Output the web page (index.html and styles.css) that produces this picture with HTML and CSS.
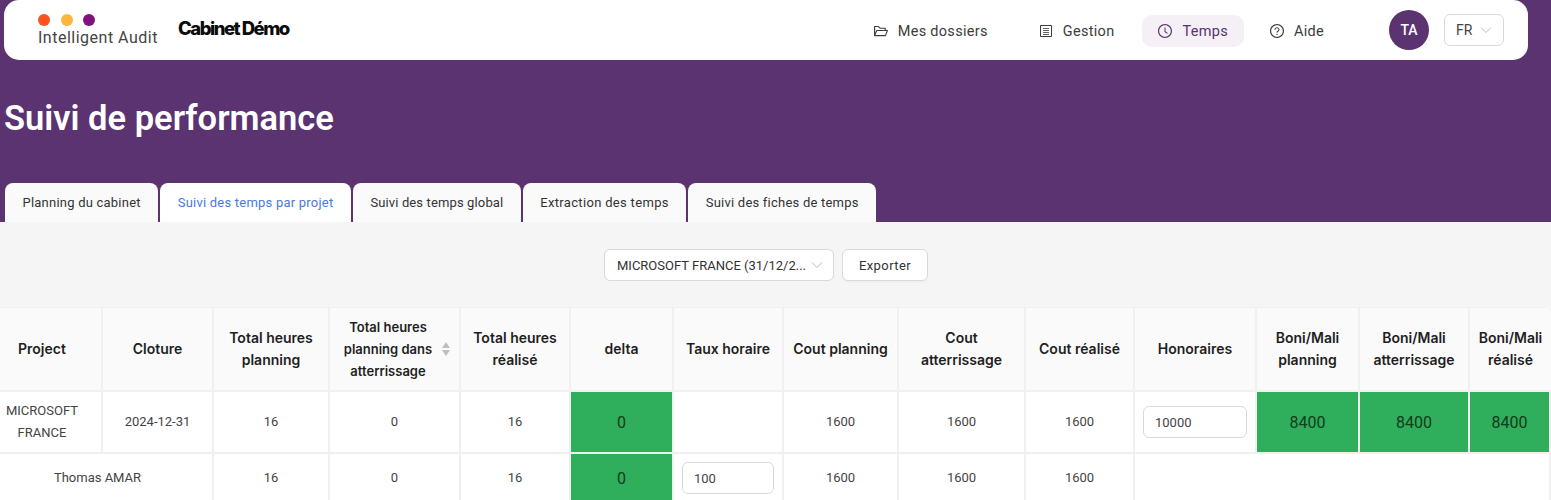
FILE: index.html
```html
<!DOCTYPE html>
<html lang="fr">
<head>
    <meta charset="UTF-8">
    <meta name="viewport" content="width=device-width, initial-scale=1.0">
    <title>Suivi de performance</title>
    <link rel="stylesheet" href="styles.css">
</head>
<body>
    <div class="page">
        <header class="topbar">
            <div class="brand">
                <div class="dots">
                    <span class="dot dot-red"></span>
                    <span class="dot dot-yellow"></span>
                    <span class="dot dot-purple"></span>
                </div>
                <div class="brand-name">Intelligent Audit</div>
            </div>
            <div class="cabinet-logo">Cabinet Démo</div>
            <nav class="nav">
                <a class="nav-item nav-dossiers">
                    <svg class="nav-icon" viewBox="0 0 1024 1024"><path d="M928 444H820V330.4c0-17.7-14.3-32-32-32H473L355.7 186.2a8.15 8.15 0 0 0-5.5-2.2H96c-17.7 0-32 14.3-32 32v592c0 17.7 14.3 32 32 32h698c13 0 24.8-7.9 29.7-20l134-332c1.5-3.8 2.3-7.9 2.3-12 0-17.7-14.3-32-32-32zM136 256h188.5l119.6 114.4H748V444H238c-13 0-24.8 7.9-29.7 20L136 643.2V256zm635.3 512H159l103.3-256h612.4L771.3 768z"/></svg>
                    Mes dossiers
                </a>
                <a class="nav-item nav-gestion">
                    <svg class="nav-icon" viewBox="0 0 16 16"><path d="M2.5 2.5h11v11h-11z" fill="none" stroke="currentColor"/><path d="M5 5.5h6M5 7.5h6M5 9.5h6M5 11.5h6" stroke="currentColor" stroke-width="0.8" fill="none"/></svg>
                    Gestion
                </a>
                <a class="nav-item nav-active">
                    <svg class="nav-icon" viewBox="0 0 1024 1024"><path d="M512 64C264.6 64 64 264.6 64 512s200.6 448 448 448 448-200.6 448-448S759.4 64 512 64zm0 820c-205.4 0-372-166.6-372-372s166.6-372 372-372 372 166.6 372 372-166.6 372-372 372z"/><path d="M686.7 638.6L544.1 535.5V288c0-4.4-3.6-8-8-8H488c-4.4 0-8 3.6-8 8v275.4c0 2.6 1.2 5 3.3 6.5l165.4 120.6c3.6 2.6 8.6 1.8 11.2-1.7l28.6-39c2.6-3.7 1.8-8.7-1.8-11.2z"/></svg>
                    Temps
                </a>
                <a class="nav-item">
                    <svg class="nav-icon" viewBox="0 0 1024 1024"><path d="M512 64C264.6 64 64 264.6 64 512s200.6 448 448 448 448-200.6 448-448S759.4 64 512 64zm0 820c-205.4 0-372-166.6-372-372s166.6-372 372-372 372 166.6 372 372-166.6 372-372 372z"/><path d="M623.6 316.7C593.6 290.4 554 276 512 276s-81.6 14.5-111.6 40.7C369.2 344 352 380.7 352 420v7.6c0 4.4 3.6 8 8 8h48c4.4 0 8-3.6 8-8V420c0-44.1 43.1-80 96-80s96 35.9 96 80c0 31.1-22 59.6-56.1 72.7-21.2 8.1-39.2 22.3-52.1 40.9-13.1 19-19.9 41.8-19.9 64.9V620c0 4.4 3.6 8 8 8h48c4.4 0 8-3.6 8-8v-22.7a48.3 48.3 0 0 1 30.9-44.8c59-22.7 97.1-74.7 97.1-132.5.1-39.3-17.1-76-48.3-103.3zM472 732a40 40 0 1 0 80 0 40 40 0 1 0-80 0z"/></svg>
                    Aide
                </a>
            </nav>
            <div class="avatar">TA</div>
            <div class="lang-select">
                <span>FR</span>
                <svg class="chevron" viewBox="0 0 12 8"><path d="M1 1.5l5 5 5-5" fill="none" stroke="currentColor"/></svg>
            </div>
        </header>

        <h1 class="page-title">Suivi de performance</h1>

        <div class="tabs">
            <div class="tab">Planning du cabinet</div>
            <div class="tab tab-active">Suivi des temps par projet</div>
            <div class="tab">Suivi des temps global</div>
            <div class="tab">Extraction des temps</div>
            <div class="tab">Suivi des fiches de temps</div>
        </div>

        <main class="content">
            <div class="toolbar">
                <div class="project-select">
                    <span>MICROSOFT FRANCE (31/12/2...</span>
                    <svg class="chevron" viewBox="0 0 12 8"><path d="M1 1.5l5 5 5-5" fill="none" stroke="currentColor"/></svg>
                </div>
                <button class="export-btn">Exporter</button>
            </div>

            <table class="perf-table">
                <colgroup>
                    <col><col><col><col><col><col><col><col><col><col><col><col><col><col>
                </colgroup>
                <thead>
                    <tr>
                        <th>Project</th>
                        <th>Cloture</th>
                        <th>Total heures planning</th>
                        <th>
                            <div class="sort-head">
                                <span>Total heures planning dans atterrissage</span>
                                <span class="sorter"><i class="caret-up"></i><i class="caret-down"></i></span>
                            </div>
                        </th>
                        <th>Total heures réalisé</th>
                        <th>delta</th>
                        <th>Taux horaire</th>
                        <th>Cout planning</th>
                        <th>Cout atterrissage</th>
                        <th>Cout réalisé</th>
                        <th>Honoraires</th>
                        <th>Boni/Mali planning</th>
                        <th>Boni/Mali atterrissage</th>
                        <th>Boni/Mali réalisé</th>
                    </tr>
                </thead>
                <tbody>
                    <tr class="row-project">
                        <td>MICROSOFT FRANCE</td>
                        <td>2024-12-31</td>
                        <td>16</td>
                        <td>0</td>
                        <td>16</td>
                        <td class="cell-green">0</td>
                        <td></td>
                        <td>1600</td>
                        <td>1600</td>
                        <td>1600</td>
                        <td class="cell-input"><input class="num-input" type="text" value="10000"></td>
                        <td class="cell-green">8400</td>
                        <td class="cell-green">8400</td>
                        <td class="cell-green">8400</td>
                    </tr>
                    <tr class="row-person">
                        <td colspan="2">Thomas AMAR</td>
                        <td>16</td>
                        <td>0</td>
                        <td>16</td>
                        <td class="cell-green">0</td>
                        <td class="cell-input"><input class="num-input" type="text" value="100"></td>
                        <td>1600</td>
                        <td>1600</td>
                        <td>1600</td>
                        <td colspan="4"></td>
                    </tr>
                </tbody>
            </table>
        </main>
    </div>
</body>
</html>
```

FILE: styles.css
```css
* {
    box-sizing: border-box;
}

html,
body {
    margin: 0;
    height: 100%;
    overflow: hidden;
}

body {
    font-family: Roboto, "Liberation Sans", sans-serif;
    color: #333;
    background: #5b3371;
}

/* header */
.topbar {
    display: flex;
    align-items: center;
    width: 1524px;
    height: 60px;
    margin-left: 4px;
    padding: 0 24px 0 34px;
    background: #fff;
    border-radius: 15px;
}

.brand {
    width: 140px;
    padding-top: 1px;
}

.dots {
    display: flex;
    gap: 10.5px;
    margin-bottom: 2px;
}

.dot {
    width: 12px;
    height: 12px;
    border-radius: 50%;
}

.dot-red {
    background: #fc5320;
}

.dot-yellow {
    background: #fbb73c;
}

.dot-purple {
    background: #81127f;
}

.brand-name {
    font-size: 16px;
    line-height: 20px;
    color: #444;
    letter-spacing: 0.5px;
    white-space: nowrap;
}

.cabinet-logo {
    font-family: Inter, sans-serif;
    font-weight: 800;
    font-size: 18.5px;
    letter-spacing: -1.5px;
    color: #0b0b0b;
    margin-top: -4px;
    white-space: nowrap;
}

.nav {
    display: flex;
    align-items: center;
    gap: 10px;
    margin-left: auto;
    margin-right: 49px;
    margin-top: 2px;
}

.nav-item {
    display: flex;
    align-items: center;
    gap: 9px;
    height: 32px;
    padding: 0 16px 0 15px;
    font-size: 14.5px;
    color: #3c3c3c;
    letter-spacing: 0.3px;
    border-radius: 10px;
    white-space: nowrap;
}

.nav-dossiers {
    margin-right: 9px;
}

.nav-gestion {
    margin-right: 2px;
}

.nav-active {
    background: #f4f0f6;
    color: #5b3371;
}

.nav-icon {
    width: 16px;
    height: 16px;
    fill: currentColor;
    flex: none;
}

.avatar {
    display: flex;
    align-items: center;
    justify-content: center;
    width: 40px;
    height: 40px;
    border-radius: 50%;
    background: #5b3371;
    color: #fff;
    font-size: 14px;
    font-weight: 500;
}

.lang-select {
    display: flex;
    align-items: center;
    justify-content: space-between;
    width: 60px;
    height: 32px;
    margin-left: 15px;
    padding: 0 11px 0 11px;
    border: 1px solid #d9d9d9;
    border-radius: 6px;
    font-size: 14px;
    color: #444;
}

.chevron {
    width: 12px;
    height: 8px;
    color: #bdbdbd;
    flex: none;
}

/* title and tabs */
.page-title {
    margin: 0;
    height: 123px;
    padding: 34px 0 0 4px;
    font-size: 34.5px;
    line-height: 48px;
    font-weight: 600;
    color: #fff;
}

.tabs {
    display: flex;
    gap: 2px;
    height: 39px;
    padding-left: 5px;
}

.tab {
    display: flex;
    align-items: center;
    padding: 0 17.5px;
    background: #fafafa;
    border-radius: 8px 8px 0 0;
    font-size: 13px;
    color: #333;
    letter-spacing: 0.22px;
    white-space: nowrap;
}

.tab:nth-child(3) {
    letter-spacing: 0.13px;
}

.tab:nth-child(4) {
    letter-spacing: 0.32px;
}

.tab-active {
    background: #fff;
    color: #4b78d8;
}

/* content */
.content {
    background: #f5f5f5;
    height: 278px;
}

.toolbar {
    display: flex;
    justify-content: center;
    gap: 8px;
    height: 85px;
    padding: 27px 19px 0 0;
}

.project-select {
    display: flex;
    align-items: center;
    justify-content: space-between;
    width: 230px;
    height: 32px;
    padding: 0 10px 0 12px;
    background: #fff;
    border: 1px solid #d9d9d9;
    border-radius: 6px;
    font-size: 13px;
    color: #333;
    white-space: nowrap;
}

.export-btn {
    width: 86px;
    height: 32px;
    padding: 0;
    background: #fff;
    border: 1px solid #d9d9d9;
    border-radius: 6px;
    box-shadow: 0 2px 0 rgba(0, 0, 0, 0.02);
    font-family: inherit;
    font-size: 13px;
    letter-spacing: 0.4px;
    color: #333;
}

/* table, scrolled a little to the right so the first column is cut */
.perf-table {
    width: 1568px;
    margin-left: -17px;
    table-layout: fixed;
    border-collapse: separate;
    border-spacing: 0;
    background: #fff;
    border-top-right-radius: 8px;
    overflow: hidden;
}

.perf-table col:nth-child(1) { width: 120px; }
.perf-table col:nth-child(2) { width: 111px; }
.perf-table col:nth-child(3) { width: 116px; }
.perf-table col:nth-child(4) { width: 131px; }
.perf-table col:nth-child(5) { width: 110px; }
.perf-table col:nth-child(6) { width: 103px; }
.perf-table col:nth-child(7) { width: 110px; }
.perf-table col:nth-child(8) { width: 115px; }
.perf-table col:nth-child(9) { width: 127px; }
.perf-table col:nth-child(10) { width: 109px; }
.perf-table col:nth-child(11) { width: 122px; }
.perf-table col:nth-child(12) { width: 103px; }
.perf-table col:nth-child(13) { width: 110px; }
.perf-table col:nth-child(14) { width: 81px; }

.perf-table th,
.perf-table td {
    padding: 0 4px;
    text-align: center;
    border-right: 2px solid #f0f0f0;
    border-bottom: 2px solid #f0f0f0;
}

.perf-table th:last-child {
    border-right: none;
}

.perf-table th {
    height: 85px;
    background: #fafafa;
    font-family: Inter, sans-serif;
    font-size: 14px;
    line-height: 22px;
    font-weight: 600;
    color: #1f1f1f;
    border-top: 1px solid #f0f0f0;
}

.perf-table td {
    font-size: 13px;
    line-height: 22px;
    color: #444;
}

.row-project td {
    height: 62px;
}

.row-person td {
    height: 50px;
    vertical-align: middle;
}

.perf-table .cell-green {
    background: #2fae5b;
    font-size: 16px;
    color: #123c1e;
    padding-top: 2px;
}

.perf-table .cell-input {
    padding: 0 8px;
}

.num-input {
    width: 100%;
    height: 32px;
    padding: 0 11px;
    background: #fff;
    border: 1px solid #d9d9d9;
    border-radius: 6px;
    font-family: inherit;
    font-size: 13px;
    color: #444;
    outline: none;
}

.sort-head {
    display: flex;
    align-items: center;
    justify-content: flex-start;
    font-size: 13px;
}

.sort-head > span:first-child {
    width: 108px;
}

.sorter {
    display: flex;
    flex-direction: column;
    gap: 2px;
}

.caret-up,
.caret-down {
    display: block;
    width: 0;
    height: 0;
    border-left: 4px solid transparent;
    border-right: 4px solid transparent;
}

.caret-up {
    border-bottom: 6px solid #bfbfbf;
}

.caret-down {
    border-top: 6px solid #bfbfbf;
}
```
